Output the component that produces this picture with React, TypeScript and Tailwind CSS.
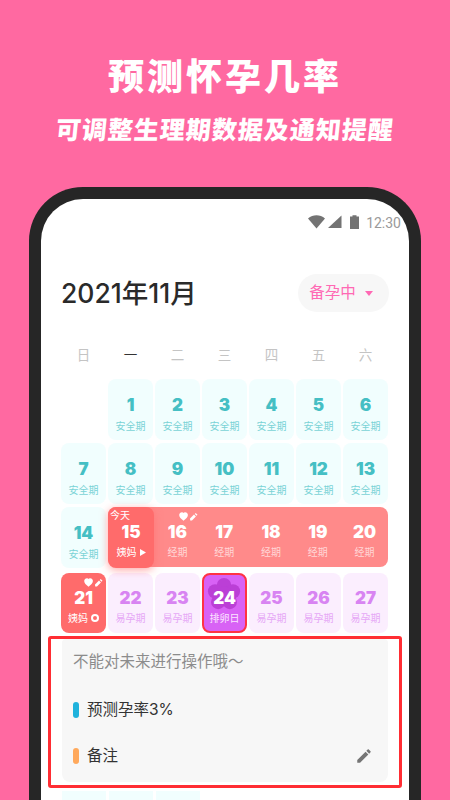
import React from 'react';

const CJK = "font-['Inter','Noto_Sans_CJK_SC',sans-serif]";
const WEEK = ['日', '一', '二', '三', '四', '五', '六'];

const HeartPen = () => (
  <svg width="19" height="9" viewBox="0 0 19 9" className="absolute top-[5px] right-[3px]">
    <path d="M4.500 8.800 C2 6.800 .2 5.300 .2 3.100 C.2 1.400 1.500 .2 3 .2 C3.800 .2 4.300 .6 4.500 1.100 C4.800 .6 5.300 .2 6.100 .2 C7.600 .2 8.900 1.400 8.900 3.100 C8.900 5.300 7 6.800 4.500 8.800Z" fill="#fff" />
    <path d="M11.200 8.600 L11 6.400 L15 2.600 L16.900 4.400 L13 8.400Z M15.800 1.900 L16.700 1 L18.500 2.800 L17.600 3.700Z" fill="#fff" />
  </svg>
);

const Cell = ({ n, label }: { n: number; label: string }) => (
  <div className="h-[61px] rounded-[8px] bg-[#f1fefe] flex flex-col items-center pt-[15px]">
    <div className="text-[17px] leading-[22px] font-black text-[#45bfc4]">{n}</div>
    <div className="text-[10px] leading-[14px] mt-[3px] text-[#7ad3d6]">{label}</div>
  </div>
);

const FertileCell = ({ n }: { n: number }) => (
  <div className="h-[60px] rounded-[8px] bg-[#fbeefe] flex flex-col items-center pt-[14px]">
    <div className="text-[17px] leading-[22px] font-black text-[#d884f2]">{n}</div>
    <div className="text-[10px] leading-[14px] mt-[2px] text-[#e6a8f6]">易孕期</div>
  </div>
);

const PeriodCell = ({ n, pen }: { n: number; pen?: boolean }) => (
  <div className="relative w-[47px] h-[60px] flex flex-col items-center pt-[14px]">
    {pen && <HeartPen />}
    <div className="text-[17px] leading-[22px] font-black text-white">{n}</div>
    <div className="text-[10px] leading-[14px] mt-[2px] text-[#ffd6d6]">经期</div>
  </div>
);

export default function App() {
  return (
    <div className={`w-[450px] h-[800px] overflow-hidden bg-[#ff69a1] flex flex-col items-center ${CJK}`}>
      <div className="pt-[54px] text-[36px] leading-[46px] font-black tracking-[3px] text-white">预测怀孕几率</div>
      <div className="mt-[14px] text-[25px] leading-[32px] font-black tracking-[1px] text-white -skew-x-6">可调整生理期数据及通知提醒</div>

      <div className="mt-[41px] w-[392px] flex-1 border-[12px] border-b-0 border-[#262626] rounded-t-[54px] bg-white overflow-hidden">
        {/* status bar */}
        <div className="h-[24px] mt-[12px] flex items-center justify-end gap-[4px] pr-[8px]">
          <svg width="17" height="14" viewBox="0 0 17 14" className="-mt-[3px]">
            <path d="M0 3.500 C5 -.8 12 -.8 17 3.500 L8.500 13.500Z" fill="#737373" />
          </svg>
          <svg width="14" height="14" viewBox="0 0 14 14" className="-mt-[3px] mr-[4px] -ml-[1px]">
            <path d="M0 13 L13.500 .5 V13Z" fill="#737373" />
          </svg>
          <svg width="9" height="14" viewBox="0 0 9 14" className="-mt-[3px]">
            <path d="M0 1.500 H2.500 V.2 H6.500 V1.500 H9 V14 H0Z" fill="#737373" />
          </svg>
          <div className="ml-[3px] text-[14px] leading-[20px] text-[#9a9a9a] font-['Roboto',sans-serif]">12:30</div>
        </div>

        {/* header */}
        <div className="mt-[39px] pl-[20px] pr-[20px] flex items-center justify-between">
          <div className="text-[26.5px] leading-[38px] font-medium text-[#2a2a2a]">2021年11月</div>
          <div className="w-[91px] h-[38px] pr-[5px] rounded-full bg-[#f7f7f7] flex items-center justify-center gap-[9px] text-[#ff69b4] text-[15.5px]">
            备孕中
            <svg width="8" height="5" viewBox="0 0 8 5"><path d="M0 0 H8 L4 5Z" fill="#ff69b4" /></svg>
          </div>
        </div>

        {/* calendar */}
        <div className="mt-[33px] ml-[20px] grid grid-cols-[repeat(7,45px)] gap-x-[2px]">
          {WEEK.map((w, i) => (
            <div key={w} className={`text-center text-[13.5px] leading-[20px] ${i === 1 ? 'text-[#333333]' : 'text-[#c4c4c4]'}`}>{w}</div>
          ))}
        </div>
        <div className="mt-[14px] ml-[20px] grid grid-cols-[repeat(7,45px)] gap-x-[2px] gap-y-[3px]">
          <div />
          {[1, 2, 3, 4, 5, 6, 7, 8, 9, 10, 11, 12, 13, 14].map(n => (
            <Cell key={n} n={n} label="安全期" />
          ))}
          {/* period band */}
          <div className="col-span-6 h-[60px] rounded-[8px] bg-[#ff8a8a] flex">
            <div className="relative w-[46px] h-[61px] shrink-0 rounded-[8px] bg-[#ff6b6b] shadow-[0_2px_8px_rgba(255,107,107,0.6)] flex flex-col items-center pt-[14px]">
              <div className="absolute top-[1px] left-[2px] text-[10px] leading-[14px] text-white">今天</div>
              <div className="text-[17px] leading-[22px] font-black text-white">15</div>
              <div className="text-[10px] leading-[14px] mt-[2px] text-white flex items-center gap-[3px]">
                姨妈
                <svg width="6" height="7" viewBox="0 0 6 7"><path d="M0 0 L6 3.500 L0 7Z" fill="#fff" /></svg>
              </div>
            </div>
            <PeriodCell n={16} pen />
            <PeriodCell n={17} />
            <PeriodCell n={18} />
            <PeriodCell n={19} />
            <PeriodCell n={20} />
          </div>
          <div className="relative h-[60px] mt-[2px] rounded-[8px] bg-[#ff6b6b] flex flex-col items-center pt-[14px]">
            <HeartPen />
            <div className="text-[17px] leading-[22px] font-black text-white">21</div>
            <div className="text-[10px] leading-[14px] mt-[2px] text-white flex items-center gap-[3px]">
              姨妈
              <span className="w-[8px] h-[8px] rounded-full border-[2px] border-white" />
            </div>
          </div>
          <div className="mt-[2px]"><FertileCell n={22} /></div>
          <div className="mt-[2px]"><FertileCell n={23} /></div>
          <div className="relative mt-[2px] h-[60px] rounded-[8px] bg-[#d862f5] border-[2px] border-[#ff3344] flex flex-col items-center pt-[12px] overflow-hidden">
            <svg width="36" height="34" viewBox="0 0 38 38" className="absolute top-[2px] left-[2px]">
              <g fill="#bb3fd6">
                <circle cx="19" cy="9" r="8" />
                <circle cx="9" cy="16" r="8" />
                <circle cx="29" cy="16" r="8" />
                <circle cx="12.500" cy="28" r="8" />
                <circle cx="25.500" cy="28" r="8" />
                <circle cx="19" cy="19" r="9" />
              </g>
            </svg>
            <div className="relative text-[17px] leading-[22px] font-black text-white">24</div>
            <div className="relative text-[10px] leading-[14px] mt-[2px] text-[#fbe6ff]">排卵日</div>
          </div>
          <div className="mt-[2px]"><FertileCell n={25} /></div>
          <div className="mt-[2px]"><FertileCell n={26} /></div>
          <div className="mt-[2px]"><FertileCell n={27} /></div>
        </div>

        {/* highlighted panel */}
        <div className="mt-[3px] ml-[7px] w-[354px] h-[152px] border-[3px] border-[#ff2d33] rounded-[3px] px-[11px]">
          <div className="h-[143px] rounded-b-[8px] rounded-t-[4px] bg-[#f7f7f7] px-[11px] pt-[13px]">
            <div className="text-[15.5px] leading-[20px] text-[#8c8c8c]">不能对未来进行操作哦～</div>
            <div className="mt-[28px] flex items-center gap-[8px]">
              <span className="w-[6px] h-[16px] rounded-full bg-[#1fb2dc]" />
              <span className="text-[15.5px] leading-[20px] text-[#333333]">预测孕率3%</span>
            </div>
            <div className="mt-[26px] flex items-center gap-[8px]">
              <span className="w-[6px] h-[16px] rounded-full bg-[#ffa95c]" />
              <span className="flex-1 text-[15.5px] leading-[20px] text-[#333333]">备注</span>
              <svg width="18" height="18" viewBox="0 0 24 24" className="mr-[4px]">
                <path fill="#757575" d="M3 17.250V21h3.750L17.810 9.940l-3.750-3.750L3 17.250zM20.710 7.040c.39-.39.39-1.020 0-1.410l-2.340-2.340c-.39-.39-1.020-.39-1.410 0l-1.830 1.830 3.750 3.750 1.830-1.830z" />
              </svg>
            </div>
          </div>
        </div>

        {/* next row peeking out */}
        <div className="mt-[3px] ml-[21px] flex gap-[3px]">
          <div className="w-[44px] h-[20px] bg-[#f1fefe]" />
          <div className="w-[44px] h-[20px] bg-[#f1fefe]" />
          <div className="w-[44px] h-[20px] bg-[#f1fefe]" />
        </div>
      </div>
    </div>
  );
}
